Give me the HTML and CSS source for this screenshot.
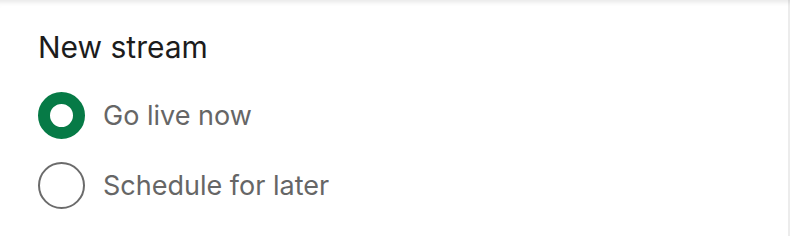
FILE: index.html
```html
<!DOCTYPE html>
<html lang="en">
<head>
<meta charset="utf-8">
<title>New stream</title>
<link rel="stylesheet" href="styles.css">
</head>
<body>
<div class="panel">
  <h2 class="title">New stream</h2>
  <div class="options">
    <label class="option">
      <span class="radio checked"></span>
      <span class="label">Go live now</span>
    </label>
    <label class="option">
      <span class="radio"></span>
      <span class="label">Schedule for later</span>
    </label>
  </div>
</div>
</body>
</html>
```
FILE: styles.css
```css
html, body {
  margin: 0;
  padding: 0;
  background: #ffffff;
}
body {
  width: 790px;
  height: 236px;
  overflow: hidden;
  font-family: Inter, "Liberation Sans", Arial, sans-serif;
}
.panel {
  box-sizing: border-box;
  width: 790px;
  height: 236px;
  padding: 29px 0 0 38px;
  background: #ffffff;
  box-shadow: inset 0 6px 5px -4px rgba(0,0,0,0.10), inset -2px 0 0 #ececec;
}
.title {
  margin: 0;
  font-size: 30px;
  font-weight: 400;
  line-height: 36px;
  color: #1c1c1c;
}
.options {
  display: flex;
  flex-direction: column;
  gap: 23px;
  margin-top: 27px;
}
.option {
  display: flex;
  align-items: center;
  gap: 18px;
}
.radio {
  box-sizing: border-box;
  width: 47px;
  height: 47px;
  border-radius: 50%;
  border: 2px solid #6b6b6b;
  background: #fff;
  flex: none;
}
.radio.checked {
  border: 12.5px solid #067a46;
}
.label {
  font-size: 27px;
  color: #666666;
}
```
